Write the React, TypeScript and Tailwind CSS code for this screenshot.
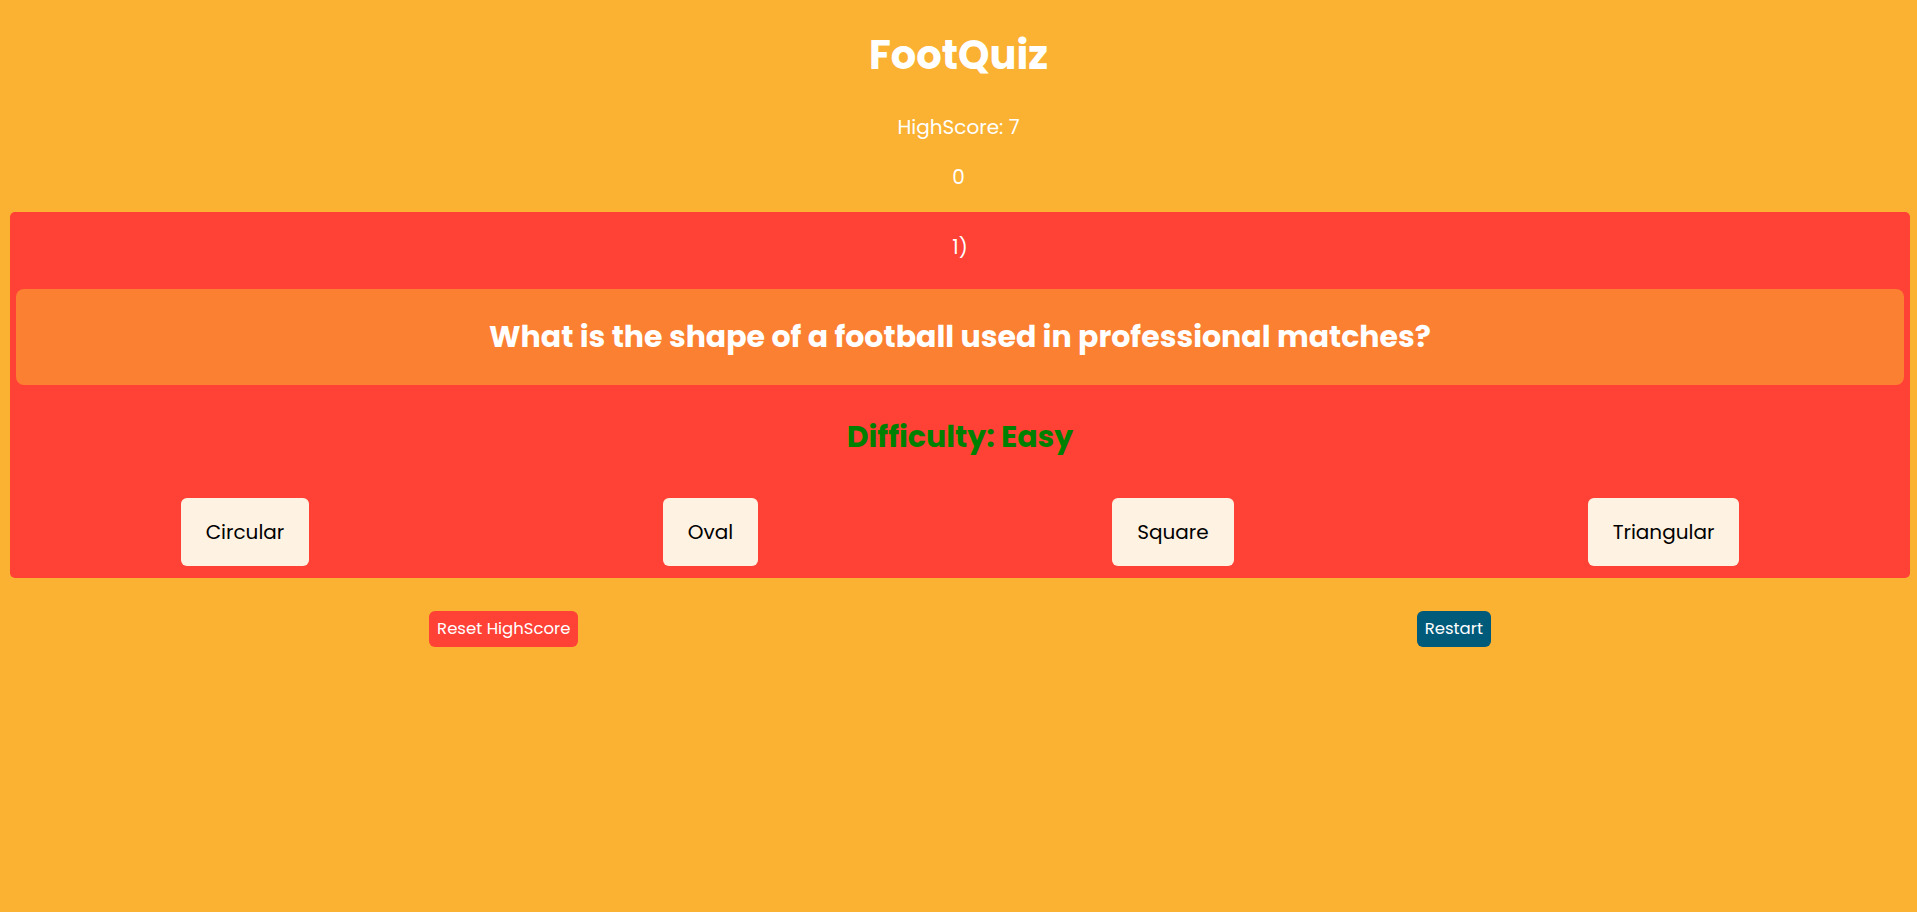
import React from 'react';

const answers = [
  { label: 'Circular', width: 'w-[128px]' },
  { label: 'Oval', width: 'w-[95px]' },
  { label: 'Square', width: 'w-[122px]' },
  { label: 'Triangular', width: 'w-[151px]' },
];

export default function App() {
  return (
    <div className="min-h-screen bg-[#fbb131] text-white font-['Poppins','Open_Sans',sans-serif]">
      {/* header */}
      <div className="flex flex-col items-center pt-[25px]">
        <h1 className="text-[40px] leading-[60px] font-bold">FootQuiz</h1>
        <p className="mt-[27px] text-[20px] leading-[30px]">HighScore: 7</p>
        <p className="mt-[20px] text-[20px] leading-[30px]">0</p>
      </div>

      {/* quiz card */}
      <div className="mt-[20px] ml-[10px] mr-[7px] rounded-[5px] bg-[#ff4136] px-[6px] pt-[20px] pb-[12px]">
        <p className="text-center text-[20px] leading-[30px]">1)</p>
        <div className="mt-[27px] rounded-[8px] bg-[#fb8031] py-[24px] text-center">
          <h2 className="text-[30px] leading-[48px] font-bold">
            What is the shape of a football used in professional matches?
          </h2>
        </div>
        <h3 className="mt-[30px] text-center text-[30px] leading-[43px] font-bold text-[#008000]">
          Difficulty: Easy
        </h3>
        <div className="mt-[40px] -mx-[12px] flex justify-around">
          {answers.map((a) => (
            <button
              key={a.label}
              className={`${a.width} h-[68px] rounded-[6px] bg-[#fef3e2] text-[20px] text-black`}
            >
              {a.label}
            </button>
          ))}
        </div>
      </div>

      {/* actions */}
      <div className="mt-[33px] ml-[10px] mr-[7px] flex justify-around">
        <button className="h-[36px] rounded-[6px] bg-[#ff4136] px-[8px] text-[16.5px] text-white">
          Reset HighScore
        </button>
        <button className="h-[36px] rounded-[6px] bg-[#005a7a] px-[8px] text-[16.5px] text-white">
          Restart
        </button>
      </div>
    </div>
  );
}
